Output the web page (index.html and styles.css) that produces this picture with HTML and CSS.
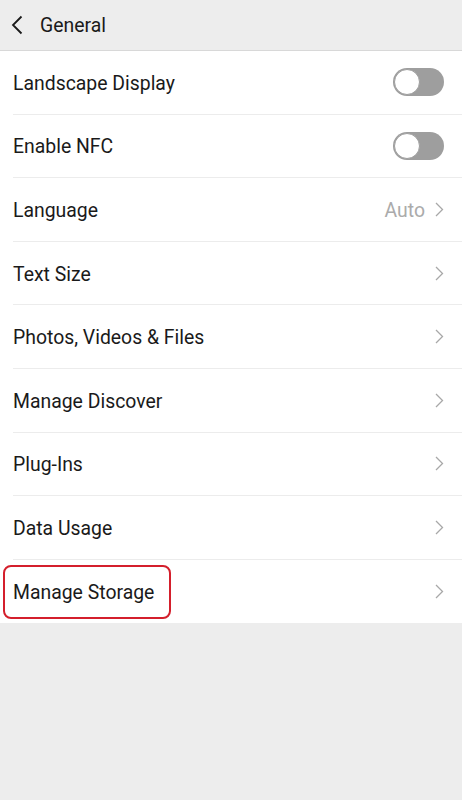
FILE: index.html
```html
<!DOCTYPE html>
<html>
<head>
<meta charset="utf-8">
<link rel="stylesheet" href="styles.css">
</head>
<body>
<div class="header">
  <svg class="back" width="12" height="20" viewBox="0 0 12 20"><path d="M10.5 1.5 L2 10 L10.5 18.5" fill="none" stroke="#1a1a1a" stroke-width="1.8"/></svg>
  <span class="title">General</span>
</div>
<div class="list">
  <div class="row"><span class="label">Landscape Display</span><span class="toggle"><span class="knob"></span></span></div>
  <div class="row"><span class="label">Enable NFC</span><span class="toggle"><span class="knob"></span></span></div>
  <div class="row"><span class="label">Language</span><span class="right"><span class="value">Auto</span><svg class="chev" width="9" height="15" viewBox="0 0 9 15"><path d="M1 1 L7.5 7.5 L1 14" fill="none" stroke="#a8a8a8" stroke-width="1.3"/></svg></span></div>
  <div class="row"><span class="label">Text Size</span><span class="right"><svg class="chev" width="9" height="15" viewBox="0 0 9 15"><path d="M1 1 L7.5 7.5 L1 14" fill="none" stroke="#a8a8a8" stroke-width="1.3"/></svg></span></div>
  <div class="row"><span class="label">Photos, Videos &amp; Files</span><span class="right"><svg class="chev" width="9" height="15" viewBox="0 0 9 15"><path d="M1 1 L7.5 7.5 L1 14" fill="none" stroke="#a8a8a8" stroke-width="1.3"/></svg></span></div>
  <div class="row"><span class="label">Manage Discover</span><span class="right"><svg class="chev" width="9" height="15" viewBox="0 0 9 15"><path d="M1 1 L7.5 7.5 L1 14" fill="none" stroke="#a8a8a8" stroke-width="1.3"/></svg></span></div>
  <div class="row"><span class="label">Plug-Ins</span><span class="right"><svg class="chev" width="9" height="15" viewBox="0 0 9 15"><path d="M1 1 L7.5 7.5 L1 14" fill="none" stroke="#a8a8a8" stroke-width="1.3"/></svg></span></div>
  <div class="row"><span class="label">Data Usage</span><span class="right"><svg class="chev" width="9" height="15" viewBox="0 0 9 15"><path d="M1 1 L7.5 7.5 L1 14" fill="none" stroke="#a8a8a8" stroke-width="1.3"/></svg></span></div>
  <div class="row last"><span class="label">Manage Storage</span><span class="right"><svg class="chev" width="9" height="15" viewBox="0 0 9 15"><path d="M1 1 L7.5 7.5 L1 14" fill="none" stroke="#a8a8a8" stroke-width="1.3"/></svg></span><span class="highlight"></span></div>
</div>
</body>
</html>
```
FILE: styles.css
```css
html, body { margin: 0; padding: 0; }
body {
  background: #ededed;
  font-family: Roboto, "Noto Sans", sans-serif;
  color: #1a1a1a;
  width: 462px;
  height: 800px;
}
.header {
  height: 51px;
  box-sizing: border-box;
  border-bottom: 1px solid #d8d8d8;
  display: flex;
  align-items: center;
  padding-left: 11px;
}
.back { display: block; margin-top: 0; }
.title { font-size: 19.4px; margin-left: 17px; }
.list { background: #fff; }
.row {
  position: relative;
  height: 63.6px;
  box-sizing: border-box;
  margin-left: 13px;
  padding-right: 18px;
  display: flex;
  align-items: center;
  justify-content: space-between;
  border-bottom: 1px solid #ececec;
}
.row.last { border-bottom: none; }
.label { font-size: 19.4px; padding-top: 2px; }
.right { display: flex; align-items: center; }
.value { font-size: 19.4px; color: #ababab; margin-right: 10px; padding-top: 2px; }
.chev { display: block; }
.toggle {
  width: 51px;
  height: 28px;
  border-radius: 14px;
  background: #9e9e9e;
  box-sizing: border-box;
  position: relative;
}
.knob {
  position: absolute;
  left: 1px;
  top: 1px;
  width: 26px;
  height: 26px;
  border-radius: 50%;
  background: #fff;
  box-sizing: border-box;
  border: 1px solid #9e9e9e;
}
.highlight {
  position: absolute;
  left: -10px;
  top: 5px;
  width: 168px;
  height: 54px;
  box-sizing: border-box;
  border: 2.5px solid #d41f2c;
  border-radius: 8px;
}
```
